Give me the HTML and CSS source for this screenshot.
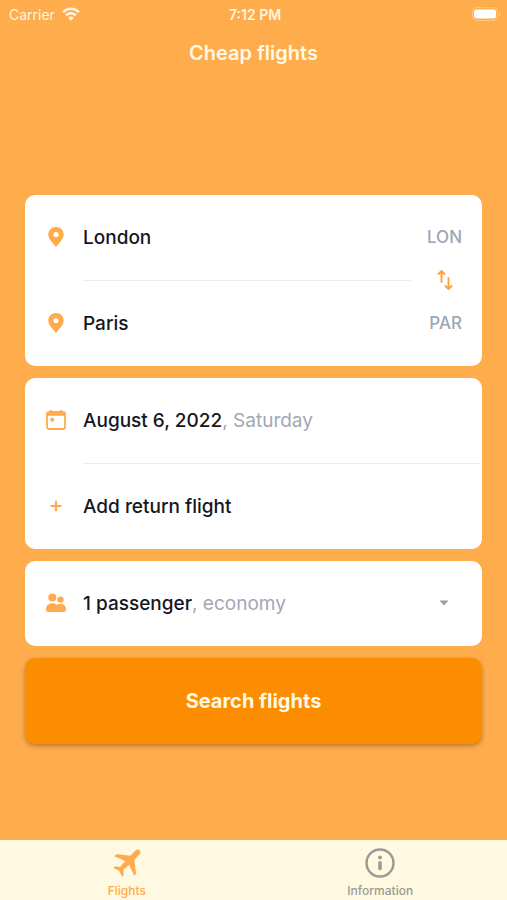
FILE: index.html
```html
<!DOCTYPE html>
<html lang="en">
<head>
<meta charset="utf-8">
<meta name="viewport" content="width=device-width, initial-scale=1">
<title>Cheap flights</title>
<link rel="stylesheet" href="styles.css">
</head>
<body>
<div class="status">
  <div class="status-left">
    <span>Carrier</span>
    <svg width="18" height="14" viewBox="0 0 18 14" aria-hidden="true">
      <g fill="none" stroke="currentColor" stroke-width="2.6">
        <path d="M1 5.2C5.4 0.5 12.6 0.5 17 5.2"/>
        <path d="M4 8.4C6.8 5.5 11.2 5.5 14 8.4"/>
      </g>
      <path fill="currentColor" d="M6.1 10.7C7.6 9.2 10.4 9.2 11.9 10.7L9 13.7Z"/>
    </svg>
  </div>
  <div class="status-time">7:12 PM</div>
  <div class="status-right">
    <svg width="29" height="14" viewBox="0 0 29 14" aria-hidden="true">
      <rect x="0.5" y="0.5" width="25" height="13" rx="4" fill="none" stroke="#fff" stroke-opacity="0.3"/>
      <rect x="2" y="2.500" width="22" height="9" rx="2.5" fill="#fff"/>
      <path d="M27 4.8C29 5.6 29 8.4 27 9.2Z" fill="#fff" fill-opacity="0.35"/>
    </svg>
  </div>
</div>
<header class="title-bar"><h1>Cheap flights</h1></header>

<main>
  <form class="search">
    <section class="card">
      <button type="button" class="row">
        <svg class="icon" viewBox="0 0 24 24" aria-hidden="true"><path fill="currentColor" fill-rule="evenodd" d="M12 2C7.6 2 4.3 5.3 4.3 9.4C4.3 14 8.5 17.2 12 22C15.500 17.200 19.700 14 19.700 9.400C19.700 5.300 16.400 2 12 2ZM12 7A2.600 2.600 0 1 1 12 12.200A2.600 2.600 0 1 1 12 7Z"/></svg>
        <span class="label">London</span>
        <span class="code">LON</span>
      </button>
      <div class="divider">
        <button type="button" class="swap" aria-label="Swap cities">
          <svg width="16" height="22" viewBox="0 0 16 22" fill="none" stroke="currentColor" stroke-width="1.900" stroke-linecap="round" stroke-linejoin="round" aria-hidden="true">
            <path d="M4.500 13V2.500M1.500 5L4.500 2L7.500 5"/>
            <path d="M11.500 9V19.500M8.500 17L11.500 20L14.500 17"/>
          </svg>
        </button>
      </div>
      <button type="button" class="row">
        <svg class="icon" viewBox="0 0 24 24" aria-hidden="true"><path fill="currentColor" fill-rule="evenodd" d="M12 2C7.6 2 4.3 5.3 4.3 9.4C4.3 14 8.5 17.2 12 22C15.500 17.200 19.700 14 19.700 9.400C19.700 5.300 16.400 2 12 2ZM12 7A2.600 2.600 0 1 1 12 12.200A2.600 2.600 0 1 1 12 7Z"/></svg>
        <span class="label">Paris</span>
        <span class="code">PAR</span>
      </button>
    </section>

    <section class="card">
      <button type="button" class="row">
        <svg class="icon" viewBox="0 0 24 24" aria-hidden="true">
          <rect x="3" y="4" width="18" height="17" rx="2" fill="none" stroke="currentColor" stroke-width="1.800"/>
          <path fill="currentColor" d="M2.500 4H21.500V7.800H2.500ZM6 2H8V5H6ZM16 2H18V5H16Z"/>
          <circle cx="8.200" cy="11.800" r="2" fill="currentColor"/>
        </svg>
        <span class="label">August 6, 2022<span class="muted">, Saturday</span></span>
      </button>
      <div class="divider divider-wide"></div>
      <button type="button" class="row">
        <svg class="icon" viewBox="0 0 24 24" aria-hidden="true"><path d="M12 7.500V16.500M7.500 12H16.500" stroke="currentColor" stroke-width="2.200" stroke-linecap="round"/></svg>
        <span class="label">Add return flight</span>
      </button>
    </section>

    <section class="card">
      <button type="button" class="row" aria-haspopup="listbox">
        <svg class="icon" viewBox="0 0 24 24" aria-hidden="true">
          <g fill="currentColor">
            <circle cx="8.300" cy="6.600" r="4"/>
            <circle cx="16.500" cy="8.600" r="3.200"/>
            <path d="M2 18.300C2 14.500 4.500 12.200 8.200 12.200C10.300 12.200 11.800 12.800 12.800 13.800C13.800 13.100 15 12.700 16.500 12.700C19.800 12.700 22 15 22 18.300C22 20 21.300 21 19.800 21H4.200C2.700 21 2 20 2 18.300Z"/>
          </g>
        </svg>
        <span class="label">1 passenger<span class="muted">, economy</span></span>
        <svg class="caret" viewBox="0 0 10 6" aria-hidden="true"><path d="M0.500 0.500H9.500L5 5.500Z" fill="currentColor"/></svg>
      </button>
    </section>

    <button type="submit" class="submit">Search flights</button>
  </form>
</main>

<nav class="tabs">
  <a href="#flights" class="tab active" aria-current="page">
    <svg width="32" height="32" viewBox="0 0 32 32" aria-hidden="true"><path fill="currentColor" d="M28.700 3.300C27.600 2.200 25.600 2.400 24.200 3.800L19.300 8.700L6.300 7.300C5.500 7.200 5 7.400 4.500 7.900L3.200 9.200L14.200 13.900L9.200 19.900L4 19.300L2.300 21L8.200 23.800L11 29.700L12.700 28L12.200 22.800L18.200 17.800L23.200 28.800L24.400 27.500C24.900 27 25 26.500 24.900 25.800L23.400 12.800L28.200 7.800C29.600 6.400 29.800 4.400 28.700 3.300Z"/></svg>
    <span>Flights</span>
  </a>
  <a href="#information" class="tab">
    <svg width="32" height="32" viewBox="0 0 32 32" aria-hidden="true">
      <circle cx="16" cy="16" r="13.500" fill="none" stroke="currentColor" stroke-width="2.400"/>
      <circle cx="16" cy="10.400" r="1.900" fill="currentColor"/>
      <rect x="14.200" y="14" width="3.600" height="9.300" rx="1.800" fill="currentColor"/>
    </svg>
    <span>Information</span>
  </a>
</nav>
</body>
</html>
```
FILE: styles.css
```css
* {
  box-sizing: border-box;
}

body {
  margin: 0;
  min-height: 100vh;
  display: flex;
  flex-direction: column;
  background: #ffac4d;
  color: #15171e;
  font-family: Inter, "Liberation Sans", sans-serif;
}

button {
  border: 0;
  padding: 0;
  background: none;
  color: inherit;
  font: inherit;
  text-align: left;
  cursor: pointer;
}

svg {
  display: block;
  flex: none;
}

.status {
  display: grid;
  grid-template-columns: 1fr auto 1fr;
  align-items: center;
  height: 28px;
  padding: 0 6px 0 9px;
  color: #fff5e0;
  font-size: 14px;
}

.status-left {
  display: flex;
  align-items: center;
  gap: 7px;
}

.status-time {
  font-weight: 600;
}

.status-right {
  display: flex;
  justify-content: flex-end;
}

.title-bar {
  display: flex;
  align-items: center;
  justify-content: center;
  height: 50px;
}

h1 {
  margin: 0;
  color: #fff9e6;
  font-size: 20px;
  font-weight: 600;
}

main {
  flex: 1;
  display: flex;
  flex-direction: column;
  justify-content: center;
  padding: 20px 25px 0;
}

.search {
  display: flex;
  flex-direction: column;
  gap: 12px;
}

.card {
  overflow: hidden;
  border-radius: 10px;
  background: #fff;
}

.row {
  display: flex;
  align-items: center;
  width: 100%;
  height: 85px;
  padding: 0 20px 0 19px;
}

.icon {
  width: 24px;
  height: 24px;
  margin-right: 15px;
  color: #ffab4c;
}

.label {
  flex: 1;
  font-size: 19px;
  font-weight: 500;
}

.muted {
  color: #a3a7b5;
  font-weight: 400;
}

.code {
  color: #a0a5b4;
  font-size: 17px;
  font-weight: 500;
}

.divider {
  display: flex;
  align-items: center;
  justify-content: flex-end;
  height: 1px;
  margin: 0 71px 0 58px;
  background: #ececef;
}

.divider-wide {
  margin-right: 2px;
}

.swap {
  flex: none;
  margin-right: -42px;
  color: #ffa23c;
}

.caret {
  width: 10px;
  height: 6px;
  margin-right: 13px;
  color: #9a9dac;
}

.submit {
  height: 86px;
  border-radius: 10px;
  background: #fd8d00;
  box-shadow: 0 2px 4px rgba(120, 70, 30, 0.5);
  color: #fff9e6;
  font-size: 20px;
  font-weight: 700;
  text-align: center;
}

.tabs {
  display: grid;
  grid-template-columns: 1fr 1fr;
  height: 60px;
  background: #fff9e1;
}

.tab {
  display: flex;
  flex-direction: column;
  align-items: center;
  gap: 4px;
  padding-top: 7px;
  color: #9b9a94;
  font-size: 12px;
  font-weight: 500;
  line-height: 16px;
  text-decoration: none;
}

.tab.active {
  color: #ffab4c;
}
```
